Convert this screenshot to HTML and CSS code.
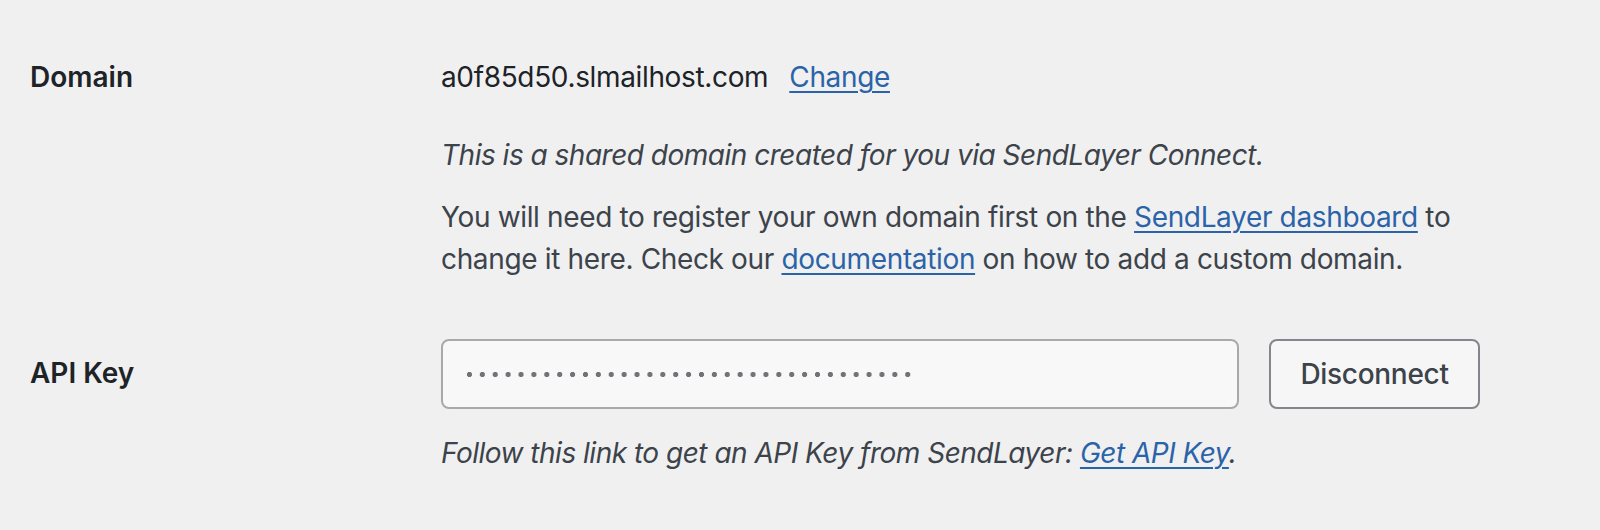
FILE: index.html
```html
<!DOCTYPE html>
<html lang="en">
<head>
<meta charset="utf-8">
<title>SendLayer settings</title>
<link rel="stylesheet" href="styles.css">
</head>
<body>
<div class="settings">
  <div class="row row-domain">
    <div class="label">Domain</div>
    <div class="field">
      <div class="value"><span class="domain">a0f85d50.slmailhost.com</span><a class="link" href="#">Change</a></div>
      <p class="desc note">This is a shared domain created for you via SendLayer Connect.</p>
      <p class="desc help">You will need to register your own domain first on the <a class="link" href="#">SendLayer dashboard</a> to change it here. Check our <a class="link" href="#">documentation</a> on how to add a custom domain.</p>
    </div>
  </div>
  <div class="row row-key">
    <div class="label">API Key</div>
    <div class="field">
      <div class="key-line">
        <div class="key-input"><span class="dots" aria-label="hidden API key"></span></div>
        <button class="btn" type="button">Disconnect</button>
      </div>
      <p class="desc note">Follow this link to get an API Key from SendLayer: <a class="link" href="#">Get API Key</a>.</p>
    </div>
  </div>
</div>
</body>
</html>
```
FILE: styles.css
```css
html, body {
  margin: 0;
  padding: 0;
  background: #f0f0f1;
}
body {
  font-family: Inter, "Noto Sans", "Liberation Sans", sans-serif;
  font-size: 28px;
  color: #1d2327;
  letter-spacing: -0.35px;
}
.settings {
  padding: 0 0 0 30px;
}
.row {
  display: grid;
  grid-template-columns: 411px 1fr;
}
.row-domain {
  padding-top: 56px;
}
.row-key {
  padding-top: 59px;
}
.label {
  font-weight: 600;
  line-height: 42px;
  color: #1d2327;
  letter-spacing: 0;
}
.row-key .label {
  padding-top: 13px;
}
.field {
  max-width: 1040px;
}
.value {
  line-height: 42px;
  display: flex;
  gap: 21px;
}
.link {
  color: #2b63a8;
  text-decoration: underline;
  text-decoration-thickness: 2px;
  text-underline-offset: 4px;
}
.desc {
  margin: 0;
  line-height: 41px;
  color: #3c434a;
}
.note {
  font-style: italic;
  letter-spacing: -0.5px;
}
.row-domain .note {
  margin-top: 37px;
}
.help {
  margin-top: 20px;
  line-height: 42px;
}
.key-line {
  display: flex;
  gap: 30px;
  align-items: stretch;
}
.key-input {
  box-sizing: border-box;
  width: 798px;
  height: 70px;
  border: 2px solid #a7aaad;
  border-radius: 8px;
  background: #f8f8f8;
  display: flex;
  align-items: center;
  padding-left: 20px;
}
.dots {
  display: block;
  width: 452px;
  height: 7px;
  background: radial-gradient(circle, #707378 2.4px, transparent 2.9px) 0 0 / 12.9px 7px repeat-x;
}
.btn {
  box-sizing: border-box;
  width: 211px;
  height: 70px;
  border: 2px solid #83868b;
  border-radius: 8px;
  background: #f6f6f6;
  color: #3c434a;
  font-family: inherit;
  font-size: 28px;
  font-weight: 500;
  letter-spacing: -0.3px;
  padding: 0;
}
.row-key .note {
  margin-top: 24px;
}
```
